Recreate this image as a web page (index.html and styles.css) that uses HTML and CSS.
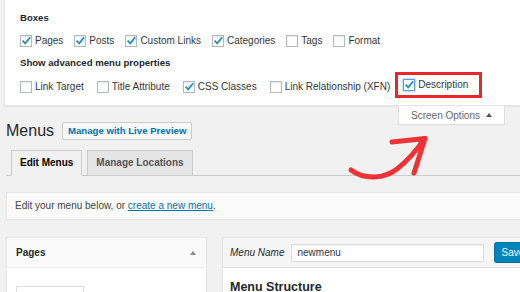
FILE: index.html
```html
<!DOCTYPE html>
<html lang="en">
<head>
  <meta charset="UTF-8">
  <meta name="viewport" content="width=device-width, initial-scale=1.0">
  <title>Menus</title>
  <link rel="stylesheet" href="styles.css">
</head>
<body>
  <div class="screen-meta">
    <h5 class="legend">Boxes</h5>
    <div class="opts opts-boxes">
      <label class="opt"><span class="cb"><svg viewBox="0 0 10 10"><path d="M1.6 4.6 L4.2 7.4 L9.2 1.2"/></svg></span>Pages</label>
      <label class="opt"><span class="cb"><svg viewBox="0 0 10 10"><path d="M1.6 4.6 L4.2 7.4 L9.2 1.2"/></svg></span>Posts</label>
      <label class="opt"><span class="cb"><svg viewBox="0 0 10 10"><path d="M1.6 4.6 L4.2 7.4 L9.2 1.2"/></svg></span>Custom Links</label>
      <label class="opt"><span class="cb"><svg viewBox="0 0 10 10"><path d="M1.6 4.6 L4.2 7.4 L9.2 1.2"/></svg></span>Categories</label>
      <label class="opt"><span class="cb"></span>Tags</label>
      <label class="opt"><span class="cb"></span>Format</label>
    </div>
    <h5 class="legend legend-adv">Show advanced menu properties</h5>
    <div class="opts opts-adv">
      <label class="opt"><span class="cb"></span>Link Target</label>
      <label class="opt"><span class="cb"></span>Title Attribute</label>
      <label class="opt"><span class="cb"><svg viewBox="0 0 10 10"><path d="M1.6 4.6 L4.2 7.4 L9.2 1.2"/></svg></span>CSS Classes</label>
      <label class="opt"><span class="cb"></span>Link Relationship (XFN)</label>
      <label class="opt marked"><span class="cb focus"><svg viewBox="0 0 10 10"><path d="M1.6 4.6 L4.2 7.4 L9.2 1.2"/></svg></span>Description</label>
    </div>
  </div>

  <div class="screen-links">
    <button class="screen-toggle">Screen Options<span class="caret"></span></button>
  </div>

  <div class="wrap">
    <div class="page-head">
      <h1>Menus</h1>
      <a class="page-action" href="#">Manage with Live Preview</a>
    </div>

    <nav class="nav-tabs">
      <a class="tab active" href="#">Edit Menus</a>
      <a class="tab" href="#">Manage Locations</a>
    </nav>

    <div class="manage-menus">
      Edit your menu below, or <a href="#">create a new menu</a>.
    </div>

    <div class="columns">
      <div class="side-box">
        <div class="box-head">
          <h3>Pages</h3>
          <span class="caret"></span>
        </div>
        <div class="box-body">
          <div class="search-field"></div>
        </div>
      </div>

      <div class="menu-edit">
        <div class="menu-head">
          <label class="menu-label" for="menuName">Menu Name</label>
          <input id="menuName" class="menu-name" type="text" value="newmenu">
          <button class="save-btn">Save Menu</button>
        </div>
        <div class="menu-body">
          <h3>Menu Structure</h3>
        </div>
      </div>
    </div>
  </div>

  <!-- hand drawn pointer to the screen options tab -->
  <svg class="arrow" viewBox="0 0 95 55">
    <path d="M11 42 C 24 52, 44 51, 57 41 C 67 33, 77 22, 84 11"/>
    <path d="M52 14 L85 10.5"/>
    <path d="M85 10.5 L74 45"/>
  </svg>
</body>
</html>
```

FILE: styles.css
```css
* {
  box-sizing: border-box;
}

html, body {
  overflow: hidden;
}

body {
  margin: 0;
  height: 292px;
  position: relative;
  background-color: #f1f1f1;
  font-family: "Liberation Sans", Arial, sans-serif;
  font-size: 10px;
  color: #444;
}

/* Screen options panel */
.screen-meta {
  margin-left: 4px;
  background-color: #fff;
  border-left: 1px solid #e5e5e5;
  border-bottom: 1px solid #e5e5e5;
  box-shadow: 0 1px 1px rgba(0, 0, 0, 0.04);
  padding: 11px 15px 11px;
}

.legend {
  margin: 0;
  font-size: 9.6px;
  font-weight: bold;
  line-height: 14px;
  color: #23282d;
}

.legend-adv {
  margin-top: 8px;
}

.opts {
  display: flex;
  align-items: center;
  height: 14px;
  margin-top: 9px;
}

.opts-boxes {
  gap: 11px;
}

.opts-adv {
  gap: 13px;
  margin-top: 10px;
}

.opt {
  display: flex;
  align-items: center;
  line-height: 14px;
  color: #32373c;
}

.cb {
  display: flex;
  align-items: center;
  justify-content: center;
  width: 12px;
  height: 12px;
  margin-right: 3px;
  background-color: #fff;
  border: 1px solid #b4b9be;
  box-shadow: inset 0 1px 2px rgba(0, 0, 0, 0.1);
}

.cb svg {
  width: 10px;
  height: 10px;
  fill: none;
  stroke: #1e8cbe;
  stroke-width: 1.7;
}

.cb.focus {
  border-color: #5b9dd9;
  box-shadow: 0 0 2px rgba(30, 140, 190, 0.8);
}

.opt.marked {
  border: 3px solid #e8262b;
  padding: 3px 11px 3px 5px;
  margin: -8px -14px -4px -8px;
}

/* Screen options tab */
.screen-links {
  float: right;
  margin-right: 15px;
}

.screen-toggle {
  display: flex;
  align-items: center;
  height: 19px;
  padding: 0 12px;
  background-color: #fff;
  border: 1px solid #ddd;
  border-top: none;
  box-shadow: 0 1px 1px -1px rgba(0, 0, 0, 0.1);
  font-family: "Liberation Sans", Arial, sans-serif;
  font-size: 10px;
  color: #666;
}

.caret {
  display: inline-block;
  width: 0;
  height: 0;
  border-left: 3px solid transparent;
  border-right: 3px solid transparent;
  border-bottom: 4px solid #72777c;
}

.screen-toggle .caret {
  margin-left: 6px;
  border-bottom-color: #555;
}

/* Page */
.wrap {
  width: 600px;
  margin-left: 6px;
  padding-top: 16px;
}

.page-head {
  display: flex;
  align-items: center;
  gap: 8px;
  height: 18px;
}

.page-head h1 {
  margin: 0;
  font-size: 16px;
  font-weight: normal;
  line-height: 18px;
  color: #23282d;
}

.page-action {
  height: 18px;
  padding: 0 5px;
  background-color: #f7f7f7;
  border: 1px solid #ccc;
  border-radius: 2px;
  font-size: 9.6px;
  font-weight: bold;
  line-height: 16px;
  color: #0073aa;
  text-decoration: none;
}

.nav-tabs {
  display: flex;
  gap: 5px;
  margin-top: 10px;
  padding-left: 5px;
  border-bottom: 1px solid #ccc;
}

.tab {
  margin-bottom: -1px;
  padding: 0 8px;
  background-color: #e5e5e5;
  border: 1px solid #ccc;
  font-size: 10px;
  font-weight: bold;
  line-height: 24px;
  color: #555;
  text-decoration: none;
}

.tab.active {
  background-color: #f1f1f1;
  border-bottom-color: #f1f1f1;
  color: #000;
}

.manage-menus {
  margin-top: 16px;
  padding: 6px 8px;
  background-color: #fbfbfb;
  border: 1px solid #e5e5e5;
  line-height: 14px;
  color: #444;
}

.manage-menus a {
  color: #0073aa;
}

.columns {
  display: flex;
  align-items: flex-start;
  gap: 15px;
  margin-top: 17px;
}

.side-box {
  width: 201px;
  height: 80px;
  background-color: #fff;
  border: 1px solid #e5e5e5;
}

.box-head {
  display: flex;
  align-items: center;
  justify-content: space-between;
  height: 30px;
  padding: 0 10px 0 9px;
  background-color: #fafafa;
  border-bottom: 1px solid #eee;
}

.box-head h3 {
  margin: 0;
  font-size: 10px;
  font-weight: bold;
  color: #23282d;
}

.box-head .caret {
  border-bottom-color: #888;
}

.box-body {
  padding: 18px 9px 0;
}

.search-field {
  width: 68px;
  height: 20px;
  border: 1px solid #ddd;
}

.menu-edit {
  flex: 1;
  height: 80px;
  background-color: #fff;
  border: 1px solid #e5e5e5;
}

.menu-head {
  display: flex;
  align-items: center;
  height: 30px;
  padding: 0 7px;
  background-color: #f5f5f5;
  border-bottom: 1px solid #dfdfdf;
}

.menu-label {
  font-style: italic;
  color: #23282d;
}

.menu-name {
  width: 193px;
  height: 18px;
  margin: 0 10px 0 7px;
  padding: 0 5px;
  border: 1px solid #ddd;
  box-shadow: inset 0 1px 2px rgba(0, 0, 0, 0.07);
  font-family: "Liberation Sans", Arial, sans-serif;
  font-size: 10px;
  color: #32373c;
}

.save-btn {
  height: 21px;
  padding: 0 6px;
  background-color: #0085ba;
  border: 1px solid #0073aa;
  border-bottom-color: #006799;
  border-radius: 3px;
  font-family: "Liberation Sans", Arial, sans-serif;
  font-size: 10px;
  color: #fff;
}

.menu-body h3 {
  margin: 0;
  padding: 11px 7px 0;
  font-size: 12.5px;
  font-weight: bold;
  line-height: 16px;
  color: #23282d;
}

/* annotation arrow */
.arrow {
  position: absolute;
  left: 340px;
  top: 128px;
  width: 95px;
  height: 55px;
  fill: none;
  stroke: #ee3236;
  stroke-width: 5;
  stroke-linecap: round;
  stroke-linejoin: round;
}
```
